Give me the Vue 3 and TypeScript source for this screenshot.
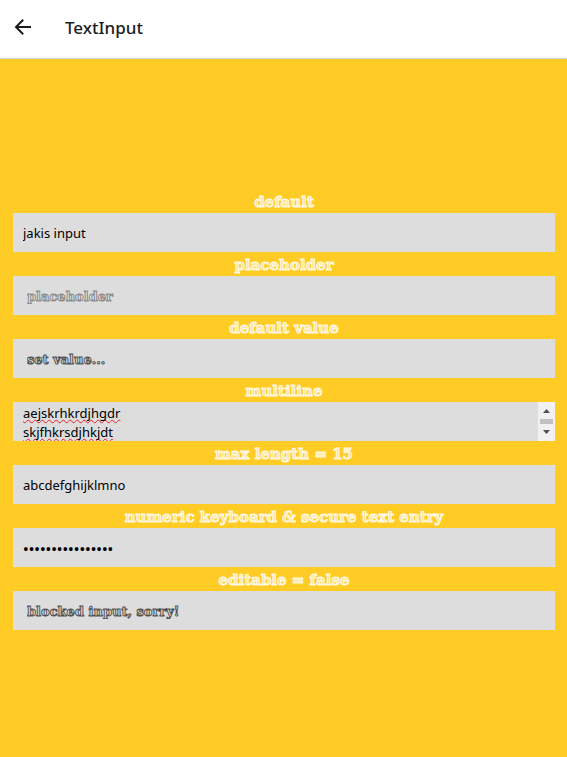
<script setup lang="ts">
import { ref } from 'vue'

interface Field {
  id: string
  label: string
  kind: 'text' | 'multiline' | 'password'
  value: string
  placeholder?: string
  decorated?: boolean
  maxLength?: number
  readonly?: boolean
}

const fields = ref<Field[]>([
  { id: 'default', label: 'default', kind: 'text', value: 'jakis input' },
  { id: 'placeholder', label: 'placeholder', kind: 'text', value: '', placeholder: 'placeholder', decorated: true },
  { id: 'default-value', label: 'default value', kind: 'text', value: 'set value...', decorated: true },
  { id: 'multiline', label: 'multiline', kind: 'multiline', value: 'aejskrhkrdjhgdr\nskjfhkrsdjhkjdt' },
  { id: 'max-length', label: 'max length = 15', kind: 'text', value: 'abcdefghijklmno', maxLength: 15 },
  { id: 'secure', label: 'numeric keyboard & secure text entry', kind: 'password', value: '1234567890123456' },
  { id: 'blocked', label: 'editable = false', kind: 'text', value: 'blocked input, sorry!', decorated: true, readonly: true },
])
</script>

<template>
  <div class="screen">
    <header class="bar">
      <button class="back" type="button" aria-label="Back">
        <svg viewBox="0 0 24 24" width="24" height="24" fill="none" stroke="#1c1c1e" stroke-width="2">
          <path d="M20 11H5.2M12.2 3.8L5 11l7.2 7.2" />
        </svg>
      </button>
      <h1 class="title">TextInput</h1>
    </header>
    <main class="content">
      <div v-for="field in fields" :key="field.id" class="field">
        <label class="label" :for="field.id">{{ field.label }}</label>
        <div v-if="field.kind === 'multiline'" class="multi">
          <textarea :id="field.id" v-model="field.value" class="area" spellcheck="false"></textarea>
          <div class="scroll" aria-hidden="true">
            <svg viewBox="0 0 7 4" width="7" height="4"><path d="M0 4L3.5 0L7 4Z" fill="#505050" /></svg>
            <span class="thumb"></span>
            <svg viewBox="0 0 7 4" width="7" height="4"><path d="M0 0L3.5 4L7 0Z" fill="#505050" /></svg>
          </div>
        </div>
        <input
          v-else
          :id="field.id"
          v-model="field.value"
          class="input"
          :class="{ decorated: field.decorated, secure: field.kind === 'password' }"
          :type="field.kind"
          :inputmode="field.kind === 'password' ? 'numeric' : undefined"
          :placeholder="field.placeholder"
          :maxlength="field.maxLength"
          :readonly="field.readonly"
          spellcheck="false"
        />
      </div>
    </main>
  </div>
</template>

<style>
body {
  margin: 0;
}
</style>

<style scoped>
.screen {
  display: flex;
  flex-direction: column;
  min-height: 100vh;
  background: #ffcb25;
  font-family: "Noto Sans", "Open Sans", sans-serif;
}
.bar {
  display: flex;
  flex: none;
  align-items: center;
  gap: 30px;
  box-sizing: border-box;
  height: 59px;
  padding: 0 11px 3px;
  border-bottom: 1px solid #d8d8d8;
  background: #fff;
}
.back {
  display: flex;
  padding: 0;
  border: 0;
  background: none;
}
.title {
  margin: 0;
  font-size: 17px;
  font-weight: 500;
  line-height: 24px;
  color: #1c1c1e;
}
.content {
  display: flex;
  flex: 1;
  flex-direction: column;
  justify-content: center;
  padding: 3px 12px 0 13px;
}
.field {
  display: flex;
  flex-direction: column;
}
.label {
  box-sizing: border-box;
  height: 24px;
  padding-top: 1px;
  font-family: "DejaVu Serif", serif;
  font-size: 15px;
  font-weight: 700;
  line-height: 24px;
  text-align: center;
  color: rgba(255, 255, 255, 0.5);
  -webkit-text-stroke: 1px rgba(255, 255, 255, 0.85);
}
.input,
.multi {
  box-sizing: border-box;
  width: 100%;
  height: 39px;
  border: 0;
  border-radius: 0;
  background: #ddd;
}
.input {
  padding: 0 10px;
  outline: none;
  font-family: inherit;
  font-size: 13px;
  color: #000;
}
.secure {
  font-size: 15px;
  font-weight: 500;
}
.decorated {
  padding: 2px 14px 0;
  font-family: "DejaVu Serif", serif;
  font-size: 13px;
  font-weight: 700;
  color: transparent;
  -webkit-text-stroke: 1px rgba(0, 0, 0, 0.65);
}
.decorated::placeholder {
  color: transparent;
  opacity: 1;
  -webkit-text-stroke: 1px rgba(0, 0, 0, 0.4);
}
.multi {
  display: flex;
}
.area {
  flex: 1;
  min-width: 0;
  padding: 2px 10px 0;
  border: 0;
  outline: none;
  resize: none;
  overflow: hidden;
  background: none;
  font-family: inherit;
  font-size: 13px;
  line-height: 19px;
  color: #000;
  text-decoration: underline wavy #e8202a 1px;
  text-underline-offset: 1px;
  text-decoration-skip-ink: none;
}
.scroll {
  display: flex;
  flex-direction: column;
  align-items: center;
  justify-content: space-between;
  box-sizing: border-box;
  width: 17px;
  padding: 7px 0;
  background: #f1f1f1;
}
.thumb {
  width: 13px;
  height: 5px;
  background: #c1c1c1;
}
</style>
